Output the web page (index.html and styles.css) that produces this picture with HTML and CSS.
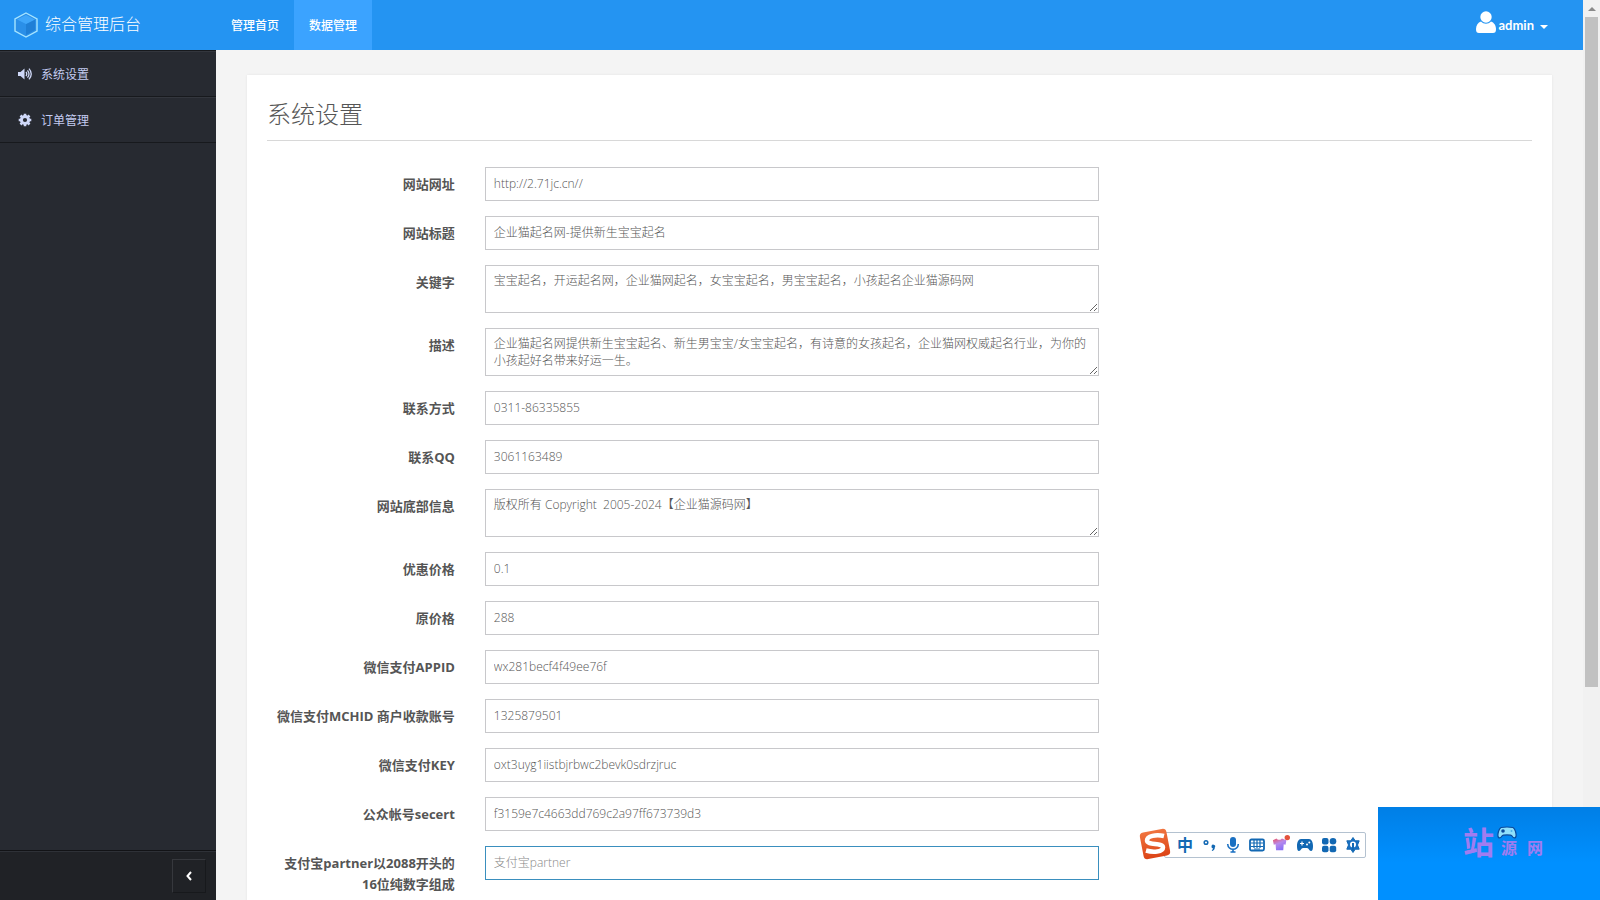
FILE: index.html
```html
<!DOCTYPE html>
<html lang="zh-CN">
<head>
<meta charset="utf-8">
<title>综合管理后台</title>
<link rel="stylesheet" href="styles.css">
</head>
<body>
<div class="window">
  <div class="app">
    <header class="topbar">
      <a class="brand" href="#">
        <svg class="brand-icon" viewBox="0 0 24 26" aria-hidden="true"><path d="M12 1 23 7v12l-11 6L1 19V7z" fill="#2a8fe8" stroke="#a5e4ff" stroke-width="1.4"/><path d="M12 12 21 7.500v10.500l-9 5z" fill="#1f7fd6"/><path d="M12 3 21 7.500 12 12 3 7.500z" fill="#3fa6fa"/></svg>
        <span>综合管理后台</span>
      </a>
      <nav class="topnav">
        <a href="#">管理首页</a>
        <a class="active" href="#">数据管理</a>
      </nav>
      <button class="user" type="button">
        <svg class="user-icon" viewBox="0 0 20 22" aria-hidden="true"><circle cx="10" cy="6" r="5.700"/><path d="M5 10.500c3 3 7 3 10 0 3 1 5 4 5 7.500 0 3-1 4-3 4H3c-2 0-3-1-3-4 0-3.500 2-6.500 5-7.500z"/></svg>
        <span>admin</span>
        <span class="caret"></span>
      </button>
    </header>
    <aside class="sidebar">
      <nav class="menu">
        <a href="#">
          <svg viewBox="0 0 14 12" aria-hidden="true"><path d="M0 4h2.500L6.500.5v11L2.500 8H0z" fill="currentColor"/><path d="M8 4q1.500 2 0 4M9.500 2.300q3 3.700 0 7.400M11 .7q4.500 5.300 0 10.600" fill="none" stroke="currentColor" stroke-width="1.300"/></svg>
          <span>系统设置</span>
        </a>
        <a href="#">
          <svg viewBox="0 0 14 14" aria-hidden="true"><circle cx="7" cy="7" r="3.600" fill="none" stroke="currentColor" stroke-width="3"/><path d="M7 .7v2.500M7 10.800v2.500M.7 7h2.500M10.800 7h2.500M2.500 2.500l1.800 1.800M9.700 9.700l1.800 1.800M2.500 11.500l1.800-1.800M9.700 4.300l1.800-1.800" stroke="currentColor" stroke-width="2.600"/></svg>
          <span>订单管理</span>
        </a>
      </nav>
      <div class="sidebar-foot">
        <button type="button" class="collapse" aria-label="收起">
          <svg viewBox="0 0 6 10" aria-hidden="true"><path d="M5 1 1.500 5 5 9" fill="none" stroke="#fff" stroke-width="2"/></svg>
        </button>
      </div>
    </aside>
    <main class="content">
      <section class="card">
        <h1>系统设置</h1>
        <form class="form">
          <div class="row"><label for="f1">网站网址</label><input id="f1" type="text" value="http://2.71jc.cn//"></div>
          <div class="row"><label for="f2">网站标题</label><input id="f2" type="text" value="企业猫起名网-提供新生宝宝起名"></div>
          <div class="row"><label for="f3">关键字</label><textarea id="f3">宝宝起名，开运起名网，企业猫网起名，女宝宝起名，男宝宝起名，小孩起名企业猫源码网</textarea></div>
          <div class="row"><label for="f4">描述</label><textarea id="f4">企业猫起名网提供新生宝宝起名、新生男宝宝/女宝宝起名，有诗意的女孩起名，企业猫网权威起名行业，为你的小孩起好名带来好运一生。</textarea></div>
          <div class="row"><label for="f5">联系方式</label><input id="f5" type="text" value="0311-86335855"></div>
          <div class="row"><label for="f6">联系QQ</label><input id="f6" type="text" value="3061163489"></div>
          <div class="row"><label for="f7">网站底部信息</label><textarea id="f7">版权所有 Copyright  2005-2024【企业猫源码网】</textarea></div>
          <div class="row"><label for="f8">优惠价格</label><input id="f8" type="text" value="0.1"></div>
          <div class="row"><label for="f9">原价格</label><input id="f9" type="text" value="288"></div>
          <div class="row"><label for="f10">微信支付APPID</label><input id="f10" type="text" value="wx281becf4f49ee76f"></div>
          <div class="row"><label for="f11">微信支付MCHID 商户收款账号</label><input id="f11" type="text" value="1325879501"></div>
          <div class="row"><label for="f12">微信支付KEY</label><input id="f12" type="text" value="oxt3uyg1iistbjrbwc2bevk0sdrzjruc"></div>
          <div class="row"><label for="f13">公众帐号secert</label><input id="f13" type="text" value="f3159e7c4663dd769c2a97ff673739d3"></div>
          <div class="row"><label for="f14">支付宝partner以2088开头的<br>16位纯数字组成</label><input id="f14" class="focused" type="text" placeholder="支付宝partner"></div>
        </form>
      </section>
    </main>
  </div>
  <div class="scrollbar" aria-hidden="true"><span class="arrow"></span><span class="thumb"></span></div>
</div>

<div class="ime">
  <svg class="ime-logo" viewBox="0 0 32 32" aria-hidden="true"><defs><linearGradient id="lg" x2="0" y2="1"><stop offset="0" stop-color="#f0743f"/><stop offset="1" stop-color="#dc4416"/></linearGradient></defs><rect x="2.500" y="2.500" width="27" height="27" rx="4" fill="url(#lg)" transform="rotate(-11 16 16)"/><path d="M25 8C17 6 8 8 8 12.500c0 5 16 2 16 7 0 4.500-10 5-17 3" fill="none" stroke="#fff" stroke-width="4.500"/></svg>
  <div class="ime-bar">
    <span class="ime-lang">中</span>
    <svg viewBox="0 0 16 16" aria-hidden="true"><circle cx="5" cy="5.500" r="1.800" fill="none" stroke="#1268b3" stroke-width="1.500"/><path d="M10.500 9.500a1.800 1.800 0 1 1 3.300 1c0 2-1 3-2.600 3.500l-.5-1c1-.4 1.300-.9 1.400-1.500-1 0-1.600-.8-1.600-2z" fill="#1268b3"/></svg>
    <svg viewBox="0 0 16 16" aria-hidden="true"><rect x="5" y="0" width="6" height="10" rx="3" fill="#1a70c2"/><path d="M2.700 7c.3 7 10.300 7 10.600 0M8 12v2.500M5.500 15h5" fill="none" stroke="#1a70c2" stroke-width="1.600"/></svg>
    <svg viewBox="0 0 16 16" aria-hidden="true"><rect x="1" y="2.500" width="14" height="11" rx="1.500" fill="#fff" stroke="#1268b3" stroke-width="1.800"/><path d="M2 6h12M2 9.500h12M5 3v8M8 3v8M11 3v8M5 12h6" stroke="#1268b3" stroke-width="1.200"/></svg>
    <svg class="wide" viewBox="0 0 20 18" aria-hidden="true"><defs><linearGradient id="sh" x2=".5" y2="1"><stop offset="0" stop-color="#ee5260"/><stop offset=".5" stop-color="#b78aec"/><stop offset="1" stop-color="#8a70f5"/></linearGradient></defs><path d="M1 6l4-2c1 2 5 2 6 0l5 2-1 5-2-.500-.5 6.500h-8L4 10.500 2 11z" fill="url(#sh)"/><circle cx="17" cy="3" r="3" fill="#e4523d"/></svg>
    <svg viewBox="0 0 16 16" aria-hidden="true"><path d="M4 2h8c2.500 0 4 3 4 7 0 3-.5 5-2 5-2 0-2-3-4-3H6c-2 0-2 3-4 3-1.500 0-2-2-2-5 0-4 1.500-7 4-7z" fill="#1268b3"/><path d="M3 6.500h4M5 4.500v4" stroke="#fff" stroke-width="1.200"/><circle cx="10" cy="7.500" r="1" fill="#fff"/><circle cx="12.300" cy="5.500" r="1" fill="#fff"/></svg>
    <svg viewBox="0 0 16 16" fill="#1268b3" aria-hidden="true"><rect x="1" y="1" width="6.500" height="6.500" rx="2"/><circle cx="12" cy="4.300" r="3.300"/><rect x="1" y="8.700" width="6.500" height="6.500" rx="2"/><rect x="8.700" y="8.700" width="6.500" height="6.500" rx="2"/></svg>
    <svg viewBox="0 0 16 16" aria-hidden="true"><path d="M8 .5l2.200 3.300h4L12.500 8l1.700 4.200h-4L8 15.500l-2.200-3.300h-4L3.500 8 1.800 3.800h4z" fill="#1a70c2" stroke="#1268b3" stroke-linejoin="round"/><circle cx="8" cy="7.500" r="3" fill="#fff"/><path d="M8 6v8" stroke="#1268b3" stroke-width="2"/></svg>
  </div>
</div>

<div class="promo">
  <div class="promo-text">
    <span class="big">站</span>
    <span class="small">源</span>
    <span class="small">网</span>
    <svg class="pad" viewBox="0 0 20 14" aria-hidden="true"><path d="M4 1.500q6-1 12 0c2 1 3.500 6 3 9-.5 2-2.500 2-4-.500-1-1.500-9-1.500-10 0-1.500 2.500-3.500 2.500-4 .5-.5-3 1-8 3-9z" fill="#8fe0fb" stroke="#0a4a9c" stroke-width="1.200"/><circle cx="6" cy="5" r="1.800" fill="#0a4a9c"/><circle cx="14.500" cy="5" r="1" fill="#4bb0e8"/></svg>
  </div>
</div>
</body>
</html>
```
FILE: styles.css
```css
* { box-sizing: border-box; }

body {
  margin: 0;
  font-family: "Open Sans", "Noto Sans CJK SC", sans-serif;
  font-size: 12px;
  color: #555;
  background: #f4f4f4;
  overflow: hidden;
}

a { color: inherit; text-decoration: none; }
button { font: inherit; color: inherit; background: none; border: 0; padding: 0; }

.window { display: flex; height: 100vh; }

.app {
  flex: 1;
  min-width: 0;
  display: grid;
  grid-template: 50px minmax(0, 1fr) / 216px minmax(0, 1fr);
}

.topbar {
  grid-column: 1 / -1;
  display: flex;
  background: #2494f2;
  color: #fff;
}

.brand {
  width: 216px;
  padding-left: 14px;
  display: flex;
  align-items: center;
  gap: 7px;
  font-size: 16px;
  font-weight: 300;
  line-height: 24px;
}
.brand span { padding-bottom: 2px; }
.brand-icon { width: 24px; height: 26px; }

.topnav { display: flex; font-weight: 500; }
.topnav a { padding: 1px 15px 0; line-height: 50px; height: 50px; }
.topnav .active { background: #3ba3ff; }

.user {
  margin-left: auto;
  padding-right: 35px;
  display: flex;
  align-items: center;
  gap: 3px;
  font: 700 13px Lato, sans-serif;
}
.user-icon { width: 20px; height: 22px; fill: #fff; margin-bottom: 6px; }
.caret {
  margin: 3px 0 0 3px;
  border: 4px solid transparent;
  border-top-color: #fff;
  border-bottom: 0;
}

.sidebar {
  display: flex;
  flex-direction: column;
  background: #272a31;
  color: #c3cbf0;
}
.menu { border-top: 1px solid #17191d; }
.menu a {
  display: flex;
  align-items: center;
  gap: 9px;
  height: 46px;
  padding-left: 18px;
  border-top: 1px solid #33363d;
  border-bottom: 1px solid #17191d;
}
.menu svg { width: 14px; height: 14px; color: #cfd8f8; }

.sidebar-foot {
  margin-top: auto;
  height: 50px;
  padding: 8px 10px;
  display: flex;
  justify-content: flex-end;
  background: #202226;
  border-top: 1px solid #121316;
  box-shadow: inset 0 1px #2e3137;
}
.collapse {
  width: 34px;
  height: 34px;
  border: 1px solid #17191c;
  border-top-color: #36383d;
  border-left-color: #36383d;
}
.collapse svg { width: 6px; height: 10px; }

.content { padding: 25px 31px; overflow: hidden; }

.card {
  padding: 22px 20px;
  background: #fff;
  box-shadow: 0 0 2px #e4e4e4;
}
.card h1 {
  margin: 0 0 26px;
  padding-bottom: 10px;
  border-bottom: 1px solid #d8d8d8;
  font-size: 24px;
  font-weight: 300;
  line-height: 33px;
}

.form { display: grid; gap: 15px; margin: 0 -12px; }
.row { display: grid; grid-template-columns: 2fr 6fr 4fr; align-items: start; }
.row label {
  padding: 7px 15px 0;
  text-align: right;
  font-size: 13px;
  font-weight: 700;
  line-height: 21px;
}
.row input,
.row textarea {
  display: block;
  margin: 0 15px;
  min-width: 0;
  height: 34px;
  padding: 5px 8px 7px;
  border: 1px solid #c8c8cb;
  border-radius: 0;
  outline: 0;
  background: #fff;
  color: #555;
  font: 300 12px/17px "Open Sans", "Noto Sans CJK SC", sans-serif;
}
.row textarea { height: 48px; padding: 6px 8px; overflow: hidden; resize: vertical; }
.row .focused { border-color: #3a8fbe; }
.row input::placeholder { color: #888; }

.scrollbar { width: 17px; padding: 0 2px; background: #f1f1f1; }
.arrow {
  display: block;
  width: 0;
  margin: 7px auto 6px;
  border: 4px solid transparent;
  border-bottom-color: #8a8a8a;
  border-top: 0;
}
.thumb { display: block; height: 74.400%; background: #c1c1c1; }

.ime {
  position: fixed;
  right: 234px;
  bottom: 40px;
  display: flex;
  align-items: flex-end;
}
.ime-logo { width: 32px; height: 32px; margin: 0 -7px 0 0; z-index: 1; }
.ime-bar {
  display: flex;
  align-items: center;
  gap: 8px;
  height: 26px;
  margin-bottom: 2px;
  padding: 0 4px 0 12px;
  background: #fff;
  border: 1px solid #b4c2d0;
  border-radius: 2px;
}
.ime-bar svg { width: 16px; height: 16px; }
.ime-bar .wide { width: 18px; height: 18px; margin: -4px -1px 0; }
.ime-lang { width: 16px; font-size: 16px; font-weight: 700; line-height: 20px; color: #1268b3; }

.promo {
  position: fixed;
  right: 0;
  bottom: 0;
  width: 222px;
  height: 93px;
  padding-top: 17px;
  background: linear-gradient(#007fe6, #0090ff 60%);
  color: #a07cf0;
  font-weight: 700;
}
.promo-text {
  position: relative;
  display: flex;
  align-items: baseline;
  gap: 10px;
  padding-left: 85px;
  line-height: 36px;
}
.big { font-size: 31px; margin-right: -3px; }
.small { font-size: 16px; }
.pad { position: absolute; left: 119px; top: 2px; width: 20px; height: 14px; }
```
